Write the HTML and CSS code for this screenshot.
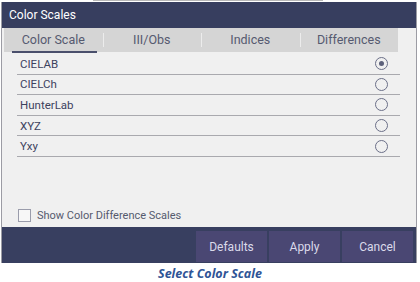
FILE: index.html
```html
<!DOCTYPE html>
<html lang="en">
<head>
    <meta charset="UTF-8">
    <title>Color Scales</title>
    <link rel="stylesheet" href="styles.css">
</head>
<body>
    <div class="top-edge"></div>
    <div class="dialog">
        <div class="dialog-title">Color Scales</div>

        <div class="dialog-body">
            <div class="tabs">
                <div class="tab active">Color Scale</div>
                <div class="tab">III/Obs</div>
                <div class="tab">Indices</div>
                <div class="tab">Differences</div>
            </div>

            <div class="scale-list">
                <div class="scale-row"><span>CIELAB</span><span class="radio checked"></span></div>
                <div class="scale-row"><span>CIELCh</span><span class="radio"></span></div>
                <div class="scale-row"><span>HunterLab</span><span class="radio"></span></div>
                <div class="scale-row"><span>XYZ</span><span class="radio"></span></div>
                <div class="scale-row"><span>Yxy</span><span class="radio"></span></div>
            </div>

            <div class="option">
                <span class="checkbox"></span>
                Show Color Difference Scales
            </div>
        </div>

        <div class="dialog-footer">
            <button class="btn">Defaults</button>
            <button class="btn">Apply</button>
            <button class="btn">Cancel</button>
        </div>
    </div>
    <div class="caption">Select Color Scale</div>
</body>
</html>
```

FILE: styles.css
```css
* {
    margin: 0;
    padding: 0;
    box-sizing: border-box;
}

body {
    font-family: Roboto, 'Noto Sans', sans-serif;
    background: #ffffff;
    width: 420px;
    height: 282px;
    overflow: hidden;
}

.top-edge {
    width: 230px;
    height: 1px;
    margin-left: 93px;
    margin-bottom: 1px;
    background: #b8b8b8;
}

.dialog {
    width: 416px;
    margin-left: 1px;
    border-left: 1px solid #9c9ca4;
    border-right: 1px solid #9c9ca4;
}

.dialog-title {
    height: 26px;
    line-height: 26px;
    padding-left: 7px;
    background: #373e5f;
    color: #ffffff;
    font-size: 12px;
}

.dialog-body {
    height: 199px;
    background: #f0f0f0;
    padding-left: 2px;
    display: flex;
    flex-direction: column;
}

.tabs {
    display: flex;
    width: 394px;
    height: 24px;
    background: #d5d5d5;
}

.tab {
    position: relative;
    flex: 1;
    text-align: center;
    line-height: 24px;
    font-size: 12.5px;
    color: #555a70;
}

.tab + .tab::before {
    content: "";
    position: absolute;
    left: 0;
    top: 5px;
    width: 1px;
    height: 14px;
    background: #ececec;
}

.tab.active::after {
    content: "";
    position: absolute;
    left: 8px;
    right: 6px;
    bottom: -1px;
    height: 2px;
    background: #4a4f6c;
}

.scale-list {
    margin: 2px 0 0 13px;
    width: 383px;
}

.scale-row {
    display: flex;
    align-items: center;
    justify-content: space-between;
    height: 20.6px;
    padding: 0 12px 0 3px;
    border-bottom: 1px solid #a9a9ae;
    font-size: 11.5px;
    color: #3d425e;
}

.radio {
    position: relative;
    width: 13px;
    height: 13px;
    border: 1.2px solid #6b6f88;
    border-radius: 50%;
}

.radio.checked::after {
    content: "";
    position: absolute;
    left: 2.5px;
    top: 2.5px;
    width: 5.6px;
    height: 5.6px;
    border-radius: 50%;
    background: #5c607a;
}

.option {
    display: flex;
    align-items: center;
    gap: 6px;
    margin: auto 0 5px 14px;
    font-size: 11px;
    color: #555a6e;
}

.checkbox {
    width: 13px;
    height: 13px;
    border: 1px solid #9a9cab;
    background: #f7f7f7;
}

.dialog-footer {
    display: flex;
    justify-content: flex-end;
    gap: 2px;
    height: 36px;
    padding: 4px 3px 1px 0;
    background: #383f60;
}

.btn {
    width: 71px;
    border: none;
    background: #4a4773;
    color: #dadaea;
    font-family: Roboto, 'Noto Sans', sans-serif;
    font-size: 12px;
}

.caption {
    margin-top: 3px;
    line-height: 15px;
    text-align: center;
    font-family: 'Open Sans', 'Liberation Sans', sans-serif;
    font-size: 12.5px;
    font-weight: bold;
    font-style: italic;
    color: #2f5496;
}
```
